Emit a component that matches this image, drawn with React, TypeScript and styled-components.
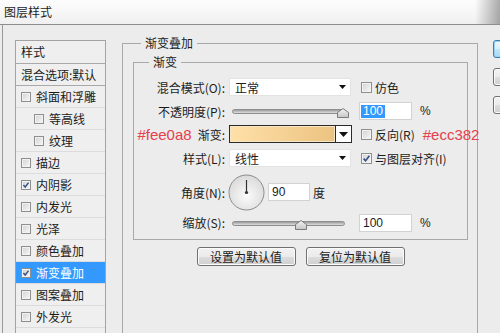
import styled, { createGlobalStyle } from 'styled-components';

const GlobalStyle = createGlobalStyle`
  html, body {
    margin: 0;
    padding: 0;
  }
  body {
    width: 500px;
    height: 333px;
    overflow: hidden;
    background: #ececec;
    font-family: 'Noto Sans CJK SC', 'Noto Sans', sans-serif;
    font-size: 12px;
    color: #1c1c1c;
  }
`;

const Dialog = styled.div`
  width: 500px;
  height: 333px;
  display: flex;
  flex-direction: column;
  overflow: hidden;
`;

const TitleBar = styled.div`
  height: 24px;
  flex-shrink: 0;
  display: flex;
  align-items: center;
  padding-left: 4px;
  border-bottom: 1px solid #8e8e8e;
  background:
    linear-gradient(to right, rgba(0, 0, 0, 0) 95%, rgba(70, 70, 70, 0.45) 100%),
    linear-gradient(#fdfdfd, #f0f0f0);
  line-height: 14px;
`;

const Body = styled.div`
  flex: 1;
  display: flex;
  align-items: flex-start;
  margin-left: 2px;
  padding: 15px 0 0 12px;
  border-left: 1px solid #9a9a9a;
  overflow: hidden;
`;

/* ---------- left style list ---------- */

const StyleList = styled.div`
  width: 91px;
  height: 310px;
  flex-shrink: 0;
  box-sizing: border-box;
  border: 1px solid #a3a3a3;
  background: #efefef;
`;

const ListHeader = styled.div<{ $tall?: boolean }>`
  height: ${p => (p.$tall ? 22 : 21)}px;
  line-height: ${p => (p.$tall ? 22 : 21)}px;
  padding-left: 5px;
  border-bottom: 1px solid #a9a9a9;
  white-space: nowrap;
`;

const ListItem = styled.div<{ $indent?: boolean; $active?: boolean }>`
  height: 21px;
  display: flex;
  align-items: center;
  gap: 5px;
  padding-left: ${p => (p.$indent ? 18 : 5)}px;
  border-bottom: 1px solid #dcdcdc;
  background: ${p => (p.$active ? '#3399ff' : 'transparent')};
  color: ${p => (p.$active ? '#fff' : 'inherit')};
  white-space: nowrap;
`;

/* ---------- checkbox ---------- */

const CheckFrame = styled.span<{ $size: number }>`
  width: ${p => p.$size}px;
  height: ${p => p.$size}px;
  flex-shrink: 0;
  box-sizing: border-box;
  border: 1px solid #8e8f8f;
  background: linear-gradient(135deg, #d2d2d2, #f7f7f7);
  box-shadow: inset 0 0 0 1px #f2f2f2;
  display: flex;
  align-items: center;
  justify-content: center;
`;

const CheckBox = ({ checked, size = 11 }: { checked?: boolean; size?: number }) => (
  <CheckFrame $size={size}>
    {checked && (
      <svg width={size - 2} height={size - 2} viewBox="0 0 9 9">
        <path d="M1.6 4.6 L3.6 6.8 L7.4 1.8" stroke="#3a5184" strokeWidth="1.6" fill="none" />
      </svg>
    )}
  </CheckFrame>
);

const CheckLabel = styled.label`
  display: flex;
  align-items: center;
  gap: 3px;
  margin-left: 2px;
  white-space: nowrap;
`;

/* ---------- group boxes ---------- */

const OuterGroup = styled.fieldset`
  width: 356px;
  height: 320px;
  flex-shrink: 0;
  box-sizing: border-box;
  margin: -4px 0 0 16px;
  padding: 5px 9px 0 10px;
  min-width: 0;
  border: 1px solid #a9a9a9;
`;

const InnerGroup = styled.fieldset`
  margin: 0;
  padding: 6px 0 7px 0;
  min-width: 0;
  border: 1px solid #a9a9a9;
`;

const Legend = styled.legend<{ $indent: number }>`
  margin-left: ${p => p.$indent}px;
  padding: 0 4px;
  line-height: 14px;
  font-size: 12px;
`;

/* ---------- form ---------- */

const FormGrid = styled.div`
  display: grid;
  grid-template-columns: 95px 130px 1fr;
  grid-template-rows: 24px 24px 22px 26px 42px 19px;
  align-items: center;
`;

const FieldLabel = styled.div`
  display: flex;
  justify-content: flex-end;
  align-items: center;
  gap: 6px;
  padding-right: 4px;
  white-space: nowrap;
`;

const Note = styled.span`
  font-family: 'Liberation Sans', Arial, sans-serif;
  font-size: 15px;
  color: #e5404b;
`;

const Extra = styled.div`
  display: flex;
  align-items: center;
  gap: 8px;
`;

const Select = styled.div`
  width: 122px;
  height: 18px;
  box-sizing: border-box;
  display: flex;
  align-items: center;
  justify-content: space-between;
  padding: 0 4px 0 5px;
  background: #fff;
  border: 1px solid #e3e3e3;
`;

const SmallArrow = () => (
  <svg width="7" height="4" viewBox="0 0 7 4">
    <path d="M0 0 H7 L3.5 4 Z" fill="#111" />
  </svg>
);

const GradientPicker = styled.div`
  display: flex;
  height: 18px;
`;

const Swatch = styled.div`
  width: 107px;
  box-sizing: border-box;
  border: 1px solid #2a2a2a;
  box-shadow: inset 0 0 0 1px #f6e6c6;
  background: linear-gradient(to right, #fee0a8, #ecc382);
`;

const SwatchArrow = styled.div`
  width: 16px;
  box-sizing: border-box;
  border: 1px solid #2a2a2a;
  border-left: none;
  background: #fff;
  display: flex;
  align-items: center;
  justify-content: center;
`;

const Slider = styled.div`
  position: relative;
  width: 122px;
  height: 12px;
`;

const Track = styled.div`
  margin: 4px 0 0 3px;
  width: 113px;
  height: 5px;
  box-sizing: border-box;
  border: 1px solid #8d8d8d;
  border-radius: 3px;
  background: linear-gradient(#9d9d9d, #dedede);
`;

const Thumb = styled.svg`
  position: absolute;
  top: 3px;
`;

const SliderControl = ({ pos }: { pos: number }) => (
  <Slider>
    <Track />
    <Thumb width="12" height="10" viewBox="0 0 12 10" style={{ left: pos }}>
      <defs>
        <linearGradient id={`th${pos}`} x1="0" y1="0" x2="0" y2="1">
          <stop offset="0" stopColor="#f6f6f6" />
          <stop offset="1" stopColor="#c4c4c4" />
        </linearGradient>
      </defs>
      <path d="M0.5 9.5 V4.5 L6 0.5 L11.5 4.5 V9.5 Z" fill={`url(#th${pos})`} stroke="#7b7b7b" />
    </Thumb>
  </Slider>
);

const NumberBox = styled.div<{ $width: number }>`
  width: ${p => p.$width}px;
  height: 18px;
  box-sizing: border-box;
  display: flex;
  align-items: center;
  padding-left: 3px;
  background: #fff;
  border: 1px solid #d2d2d2;
  font-family: 'Liberation Sans', Arial, sans-serif;
  font-size: 12px;
`;

const Selected = styled.span`
  margin-left: -2px;
  padding: 0 2px;
  background: #3399ff;
  color: #fff;
  line-height: 13px;
`;

const Unit = styled.span`
  font-family: 'Liberation Sans', Arial, sans-serif;
  font-size: 12px;
`;

const AngleRow = styled.div`
  grid-column: 2 / 4;
  display: flex;
  align-items: center;
  gap: 3px;
  margin-left: -1px;
`;

const AngleDial = () => (
  <svg width="37" height="37" viewBox="0 0 37 37">
    <defs>
      <radialGradient id="dial" cx="0.5" cy="0.6" r="0.6">
        <stop offset="0" stopColor="#fbfbfb" />
        <stop offset="1" stopColor="#d9d9d9" />
      </radialGradient>
    </defs>
    <circle cx="18.5" cy="18.5" r="17.5" fill="url(#dial)" stroke="#8c8c8c" />
    <line x1="18.5" y1="18.5" x2="18.5" y2="6" stroke="#333" strokeWidth="1.2" />
    <circle cx="18.5" cy="18.5" r="1.6" fill="#333" />
  </svg>
);

const ButtonRow = styled.div`
  display: flex;
  justify-content: center;
  gap: 10px;
  margin-top: 7px;
`;

const PushButton = styled.button`
  width: 99px;
  height: 19px;
  padding: 0;
  border: 1px solid #707070;
  border-radius: 3px;
  background: linear-gradient(#f2f2f2 0%, #ebebeb 50%, #dddddd 51%, #cfcfcf 100%);
  box-shadow: inset 0 0 0 1px #fcfcfc;
  font-family: inherit;
  font-size: 12px;
  line-height: 17px;
  color: #1c1c1c;
`;

/* ---------- right side buttons ---------- */

const SideButtons = styled.div`
  display: flex;
  flex-direction: column;
  gap: 10px;
  margin-left: 15px;
  flex-shrink: 0;
`;

const SideButton = styled.div<{ $default?: boolean }>`
  width: 75px;
  height: 18px;
  box-sizing: border-box;
  border: 1px solid ${p => (p.$default ? '#3c7fb1' : '#707070')};
  border-radius: 3px;
  background: ${p =>
    p.$default
      ? 'linear-gradient(#eaf6fd 0%, #d9f0fc 50%, #bee6fd 51%, #a7d9f5 100%)'
      : 'linear-gradient(#f2f2f2 0%, #ebebeb 50%, #dddddd 51%, #cfcfcf 100%)'};
  box-shadow: inset 0 0 0 1px ${p => (p.$default ? '#9ad1f0' : '#fcfcfc')};
`;

const listItems = [
  { label: '斜面和浮雕' },
  { label: '等高线', indent: true },
  { label: '纹理', indent: true },
  { label: '描边' },
  { label: '内阴影', checked: true },
  { label: '内发光' },
  { label: '光泽' },
  { label: '颜色叠加' },
  { label: '渐变叠加', checked: true, active: true },
  { label: '图案叠加' },
  { label: '外发光' },
];

export default function App() {
  return (
    <Dialog>
      <GlobalStyle />
      <TitleBar>图层样式</TitleBar>
      <Body>
        <StyleList>
          <ListHeader $tall>样式</ListHeader>
          <ListHeader>混合选项:默认</ListHeader>
          {listItems.map(item => (
            <ListItem key={item.label} $indent={item.indent} $active={item.active}>
              <CheckBox checked={item.checked} size={10} />
              {item.label}
            </ListItem>
          ))}
        </StyleList>

        <OuterGroup>
          <Legend $indent={8}>渐变叠加</Legend>
          <InnerGroup>
            <Legend $indent={15}>渐变</Legend>
            <FormGrid>
              <FieldLabel>混合模式(O):</FieldLabel>
              <Select>
                正常
                <SmallArrow />
              </Select>
              <CheckLabel>
                <CheckBox />
                仿色
              </CheckLabel>

              <FieldLabel>不透明度(P):</FieldLabel>
              <SliderControl pos={108} />
              <Extra>
                <NumberBox $width={53}>
                  <Selected>100</Selected>
                </NumberBox>
                <Unit>%</Unit>
              </Extra>

              <FieldLabel>
                <Note>#fee0a8</Note>
                渐变:
              </FieldLabel>
              <GradientPicker>
                <Swatch />
                <SwatchArrow>
                  <svg width="9" height="5" viewBox="0 0 9 5">
                    <path d="M0 0 H9 L4.5 5 Z" fill="#111" />
                  </svg>
                </SwatchArrow>
              </GradientPicker>
              <Extra>
                <CheckLabel>
                  <CheckBox />
                  反向(R)
                </CheckLabel>
                <Note>#ecc382</Note>
              </Extra>

              <FieldLabel>样式(L):</FieldLabel>
              <Select>
                线性
                <SmallArrow />
              </Select>
              <CheckLabel>
                <CheckBox checked />
                与图层对齐(I)
              </CheckLabel>

              <FieldLabel>角度(N):</FieldLabel>
              <AngleRow>
                <AngleDial />
                <NumberBox $width={42}>90</NumberBox>
                度
              </AngleRow>

              <FieldLabel>缩放(S):</FieldLabel>
              <SliderControl pos={66} />
              <Extra>
                <NumberBox $width={53}>100</NumberBox>
                <Unit>%</Unit>
              </Extra>
            </FormGrid>
          </InnerGroup>
          <ButtonRow>
            <PushButton>设置为默认值</PushButton>
            <PushButton>复位为默认值</PushButton>
          </ButtonRow>
        </OuterGroup>

        <SideButtons>
          <SideButton $default />
          <SideButton />
          <SideButton />
        </SideButtons>
      </Body>
    </Dialog>
  );
}
